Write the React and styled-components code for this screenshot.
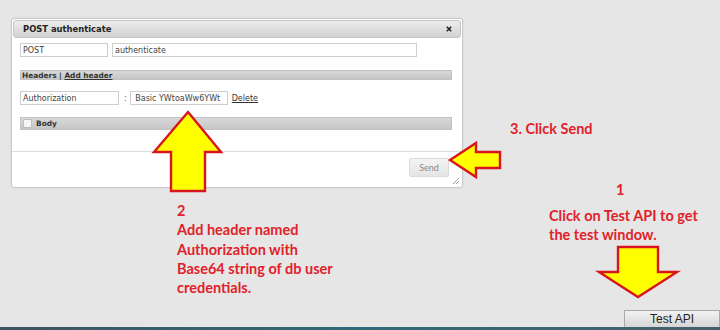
import React from 'react';
import styled, { createGlobalStyle } from 'styled-components';

const GlobalStyle = createGlobalStyle`
  html, body {
    margin: 0;
    padding: 0;
    background: #e6e6e6;
  }
`;

const Page = styled.div`
  position: relative;
  width: 720px;
  height: 330px;
  display: flex;
  flex-direction: column;
  overflow: hidden;
  background: #e6e6e6;
  font-family: "DejaVu Sans", Verdana, sans-serif;
`;

const Dialog = styled.div`
  position: relative;
  box-sizing: border-box;
  width: 452px;
  height: 170px;
  margin: 18px 0 0 11px;
  padding: 1px;
  display: flex;
  flex-direction: column;
  background: #fff;
  border: 1px solid #c9c9c9;
  border-radius: 3px;
  box-shadow: 0 0 2px rgba(0, 0, 0, 0.08);
`;

const TitleBar = styled.div`
  box-sizing: border-box;
  height: 18px;
  display: flex;
  align-items: center;
  justify-content: space-between;
  padding: 0 8px 0 9px;
  background: linear-gradient(#ececec, #d2d2d2);
  border: 1px solid #c6c6c6;
  border-radius: 3px;
`;

const Title = styled.span`
  font-size: 8.4px;
  font-weight: 700;
  color: #222;
`;

const Close = styled.span`
  display: flex;
  width: 6px;
  height: 6px;
`;

const Content = styled.div`
  padding: 5px 9px 0 7px;
`;

const Row = styled.div`
  display: flex;
  align-items: center;
  gap: ${(p) => p.gap ?? 4}px;
  margin-top: ${(p) => p.top || 0}px;
  height: 14px;
`;

const Field = styled.div`
  box-sizing: border-box;
  width: ${(p) => p.w}px;
  height: 14px;
  padding: 0 2px;
  display: flex;
  align-items: center;
  border: 1px solid #cfcfcf;
  font-size: 8px;
  color: #444;
  white-space: nowrap;
  overflow: hidden;
`;

const Colon = styled.span`
  font-size: 8px;
  color: #666;
  margin: 0 3px 0 5px;
`;

const LinkText = styled.span`
  font-size: 8px;
  color: #333;
  margin-left: 4px;
  text-decoration: underline;
`;

const SectionBar = styled.div`
  box-sizing: border-box;
  height: ${(p) => p.h}px;
  margin-top: ${(p) => p.top}px;
  display: flex;
  align-items: center;
  padding-left: 1px;
  background: linear-gradient(#d9d9d9, #c6c6c6);
  border: 1px solid #c2c2c2;
  font-size: 7.4px;
  font-weight: 700;
  color: #333;
`;

const BarLink = styled.span`
  text-decoration: underline;
`;

const CheckBox = styled.span`
  box-sizing: border-box;
  width: 9px;
  height: 9px;
  margin: 0 4px 0 1px;
  background: #f4f4f4;
  border: 1px solid #bdbdbd;
  border-radius: 1px;
`;

const Footer = styled.div`
  margin: auto -1px -1px;
  height: 36px;
  box-sizing: border-box;
  border-top: 1px solid #dcdcdc;
  display: flex;
  justify-content: flex-end;
  padding: 6px 13px 0 0;
`;

const SendButton = styled.div`
  box-sizing: border-box;
  width: 40px;
  height: 19px;
  display: flex;
  align-items: center;
  justify-content: center;
  background: linear-gradient(#f4f4f4, #e4e4e4);
  border: 1px solid #dadada;
  border-radius: 2px;
  font-family: Lato, "Open Sans", sans-serif;
  font-size: 9px;
  color: #8a8a8a;
`;

const Grip = styled.svg`
  position: absolute;
  right: 2px;
  bottom: 2px;
`;

const Spacer = styled.div`
  flex: 1;
`;

const BottomBar = styled.div`
  display: flex;
  justify-content: flex-end;
`;

const TestButton = styled.div`
  box-sizing: border-box;
  width: 96px;
  height: 17px;
  display: flex;
  align-items: center;
  justify-content: center;
  background: linear-gradient(#f2f2f2, #d6d6d6);
  border: 1px solid #a9a9a9;
  border-bottom: none;
  font-family: "Liberation Sans", Arial, sans-serif;
  font-size: 12px;
  color: #222;
`;

const Taskbar = styled.div`
  height: 3px;
  background: linear-gradient(90deg, #3d5560, #2f6a78 50%, #46606a);
`;

const Overlay = styled.svg`
  position: absolute;
  left: 0;
  top: 0;
  pointer-events: none;
`;

const Note = styled.div`
  position: absolute;
  left: ${(p) => p.x}px;
  top: ${(p) => p.y}px;
  font-family: Lato, "Open Sans", sans-serif;
  font-size: 14.5px;
  font-weight: 700;
  line-height: 19.3px;
  color: #e0222a;
  white-space: nowrap;
`;

const arrows = [
  '188,112 221,152 205,152 205,191 171,191 171,152 154,152',
  '450,160 476,143 476,152 500,152 500,168 476,168 476,177',
  '618,247 658,247 658,272 677,272 638,297 599,272 618,272',
];

export default function App() {
  return (
    <Page>
      <GlobalStyle />
      <Dialog>
        <TitleBar>
          <Title>POST authenticate</Title>
          <Close>
            <svg width="6" height="6" viewBox="0 0 6 6">
              <path d="M0.8 0.8 L5.2 5.2 M5.2 0.8 L0.8 5.2" stroke="#222" strokeWidth="1.6" />
            </svg>
          </Close>
        </TitleBar>
        <Content>
          <Row>
            <Field w={88}>POST</Field>
            <Field w={305}>authenticate</Field>
          </Row>
          <SectionBar h={10} top={13}>
            Headers |&nbsp;<BarLink>Add header</BarLink>
          </SectionBar>
          <Row top={11} gap={0}>
            <Field w={99}>Authorization</Field>
            <Colon>:</Colon>
            <Field w={98}>&nbsp;Basic YWtoaWw6YWt</Field>
            <LinkText>Delete</LinkText>
          </Row>
          <SectionBar h={13} top={12}>
            <CheckBox />
            Body
          </SectionBar>
        </Content>
        <Footer>
          <SendButton>Send</SendButton>
        </Footer>
        <Grip width="8" height="8" viewBox="0 0 8 8">
          <path d="M7 1 L1 7 M7 4 L4 7 M7 6.5 L6.5 7" stroke="#888" strokeWidth="0.8" />
        </Grip>
      </Dialog>
      <Spacer />
      <BottomBar>
        <TestButton>Test API</TestButton>
      </BottomBar>
      <Taskbar />

      <Overlay width="720" height="330" viewBox="0 0 720 330">
        {arrows.map((pts) => (
          <polygon key={pts} points={pts} fill="#ffff00" stroke="#d8141c" strokeWidth="2.4" strokeLinejoin="miter" />
        ))}
      </Overlay>
      <Note x={510} y={119}>3. Click Send</Note>
      <Note x={616} y={180}>1</Note>
      <Note x={549} y={206}>
        Click on Test API to get
        <br />
        the test window.
      </Note>
      <Note x={177} y={201}>
        2
        <br />
        Add header named
        <br />
        Authorization with
        <br />
        Base64 string of db user
        <br />
        credentials.
      </Note>
    </Page>
  );
}
